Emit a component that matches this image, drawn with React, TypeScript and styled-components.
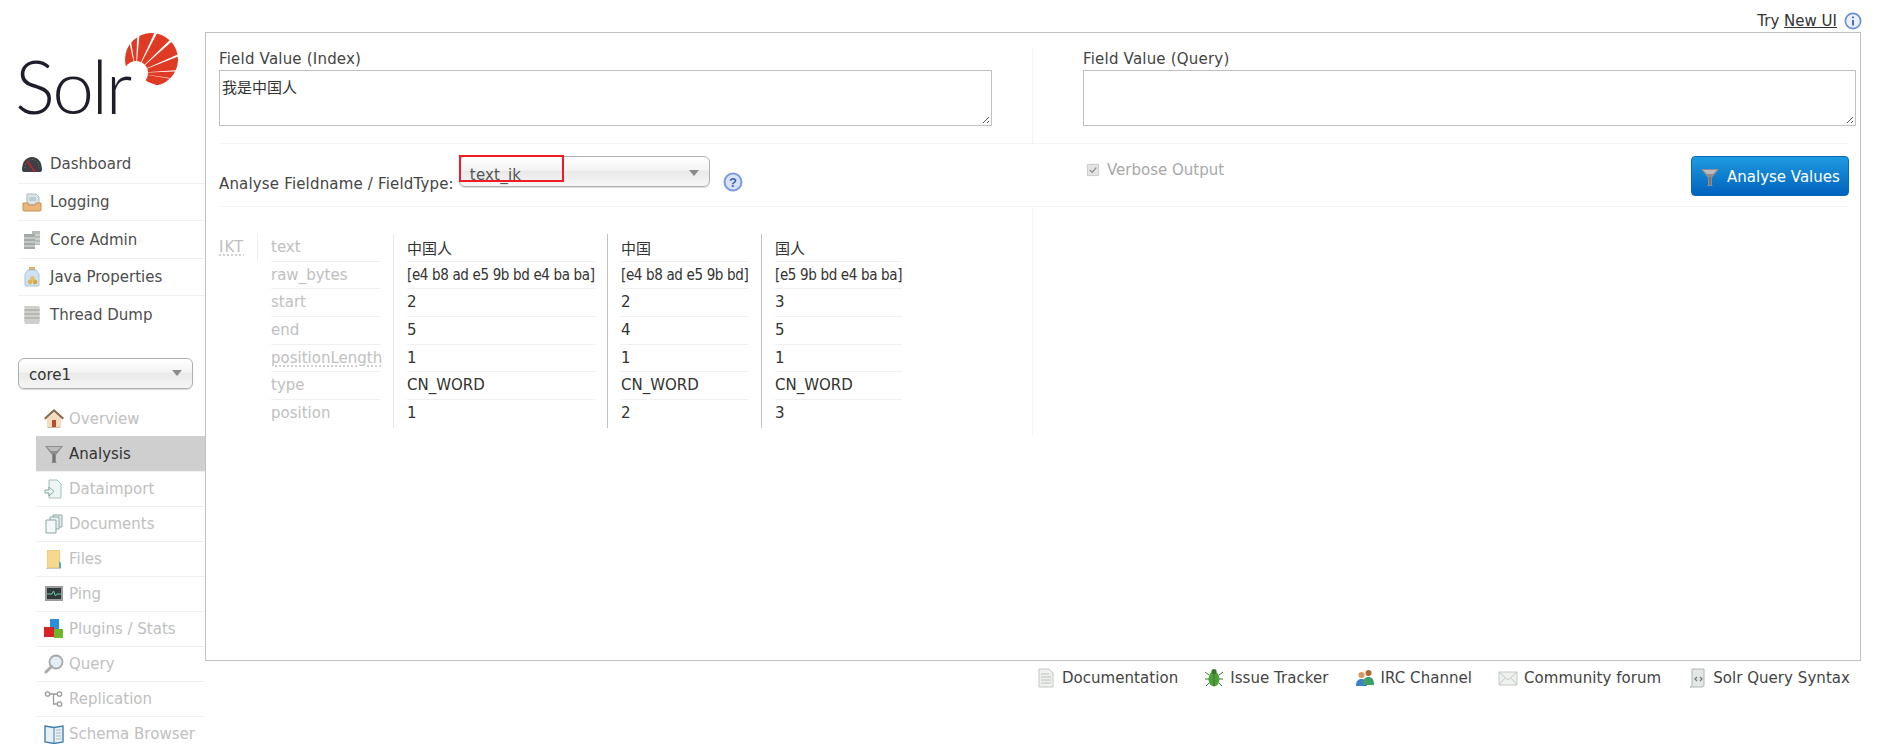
import * as React from "react";
import styled, { createGlobalStyle } from "styled-components";

const GlobalStyle = createGlobalStyle`
  html, body {
    margin: 0;
    height: 100%;
    overflow: hidden;
    background: #fff;
  }
  body {
    font-family: "DejaVu Sans", "Noto Sans CJK SC", sans-serif;
    font-size: 15px;
    color: #4d4d4d;
  }
`;

const Page = styled.div`
  display: flex;
  height: 744px;
  padding: 0 18px;
  box-sizing: border-box;
`;

const Sidebar = styled.aside`
  width: 187px;
  flex: none;
`;

const Logo = styled.div`
  position: relative;
  height: 145px;
  box-sizing: border-box;
  padding-top: 43px;
  margin-left: -3px;
`;

const LogoWord = styled.span`
  position: relative;
  z-index: 1;
  font-family: Lato, sans-serif;
  font-weight: 300;
  font-size: 75px;
  line-height: 84px;
  letter-spacing: -2.5px;
  color: #1f1c2c;
`;

const Sun = styled.svg`
  position: absolute;
  left: 109px;
  top: 32px;
`;

const MainMenu = styled.ul`
  list-style: none;
  margin: 0;
  padding: 0;
`;

const MainItem = styled.li`
  display: flex;
  align-items: center;
  gap: 8px;
  height: 37.5px;
  padding: 1px 0 0 4px;
  box-sizing: border-box;
  border-top: 1px solid #f0f0f0;
  &:first-child {
    border-top: 0;
  }
`;

const CoreSelect = styled.div`
  display: flex;
  align-items: center;
  justify-content: space-between;
  width: 175px;
  height: 31px;
  margin: 25px 0 12px;
  padding: 3px 10px 0;
  box-sizing: border-box;
  border: 1px solid #b0b0b0;
  border-radius: 6px;
  background: linear-gradient(#fff 0%, #f4f4f4 45%, #e9e9e9 50%, #f6f6f6 100%);
  box-shadow: 0 1px 1px rgba(0, 0, 0, 0.15);
  color: #333;
`;

const Caret = styled.i`
  display: block;
  margin-top: -3px;
  border-left: 5px solid transparent;
  border-right: 5px solid transparent;
  border-top: 6px solid #8a8a8a;
`;

const CoreMenu = styled.ul`
  list-style: none;
  margin: 0 0 0 18px;
  padding: 0;
`;

const CoreItem = styled.li<{ $active?: boolean }>`
  display: flex;
  align-items: center;
  gap: 5px;
  height: 35px;
  padding: 1px 0 0 8px;
  box-sizing: border-box;
  border-top: 1px solid ${(p) => (p.$active ? "#cfcfcf" : "#f0f0f0")};
  background: ${(p) => (p.$active ? "#cfcfcf" : "transparent")};
  color: ${(p) => (p.$active ? "#333" : "#c0c0c0")};
  &:first-child {
    border-top-color: transparent;
  }
`;

const Main = styled.main`
  flex: 1;
  min-width: 0;
`;

const TopBar = styled.div`
  display: flex;
  justify-content: flex-end;
  align-items: center;
  gap: 7px;
  height: 32px;
  padding: 9px 0 0 0;
  box-sizing: border-box;
  color: #333;
`;

const NewUi = styled.a`
  color: #333;
  text-decoration: underline;
`;

const Panel = styled.section`
  height: 629px;
  margin-right: 1px;
  padding: 15px 11px 0 13px;
  box-sizing: border-box;
  border: 1px solid #c0c0c0;
`;

const FormRow = styled.div<{ $height: number }>`
  display: grid;
  grid-template-columns: 814px 1fr;
  height: ${(p) => p.$height}px;
  box-sizing: border-box;
  border-bottom: 1px solid #f4f4f4;
`;

const FieldCell = styled.div<{ $right?: boolean }>`
  box-sizing: border-box;
  padding: ${(p) => (p.$right ? "0 0 0 50px" : "0 40px 0 0")};
  border-right: ${(p) => (p.$right ? "0" : "1px solid #f4f4f4")};
`;

const FieldLabel = styled.label`
  display: block;
  height: 22px;
  line-height: 23px;
  letter-spacing: 0.2px;
  color: #444;
`;

const ValueBox = styled.div<{ $overhang?: number }>`
  position: relative;
  height: 56px;
  margin-right: ${(p) => -(p.$overhang ?? 0)}px;
  padding: 5px 2px;
  box-sizing: border-box;
  border: 1px solid #c0c0c0;
  color: #333;
`;

const Grip = styled.svg`
  position: absolute;
  right: 1px;
  bottom: 1px;
`;

const Cjk = styled.span`
  font-family: "Noto Sans CJK SC", sans-serif;
  font-size: 15px;
`;

const OptionsLeft = styled.div`
  display: flex;
  align-items: flex-start;
  padding-top: 12px;
`;

const FieldTypeLabel = styled.label`
  margin: 19px 5px 0 0;
  letter-spacing: 0.17px;
  white-space: nowrap;
  color: #444;
`;

const TypeSelectWrap = styled.div`
  position: relative;
`;

const TypeSelect = styled(CoreSelect)`
  width: 251px;
  margin: 0;
  padding-top: 6px;
  letter-spacing: 0.2px;
  color: #555;
`;

const RedMark = styled.div`
  position: absolute;
  left: 0;
  top: -1px;
  width: 105px;
  height: 27px;
  box-sizing: border-box;
  border: 2px solid #ee1c25;
`;

const HelpIcon = styled.span`
  margin: 16px 0 0 13px;
`;

const OptionsRight = styled.div`
  display: flex;
  justify-content: space-between;
  padding: 17px 0 0 52px;
`;

const Verbose = styled.label`
  display: flex;
  align-items: center;
  gap: 6px;
  height: 18px;
  color: #a8a8a8;
`;

const AnalyseButton = styled.button`
  display: flex;
  align-items: center;
  gap: 7px;
  height: 40px;
  width: 158px;
  margin-top: -5px;
  padding: 1px 4px 0 8px;
  border: 1px solid #0a66b8;
  border-radius: 4px;
  background: linear-gradient(#1f9be0, #0062bd);
  color: #fff;
  font: inherit;
  white-space: nowrap;
`;

const Analysis = styled.div`
  display: grid;
  grid-template-columns: 814px 1fr;
`;

const AnalysisLeft = styled.div`
  display: flex;
  align-items: flex-start;
  height: 229px;
  padding-top: 27px;
  box-sizing: border-box;
  border-right: 1px solid #f4f4f4;
`;

const Tokenizer = styled.div`
  width: 39px;
  height: 27px;
  line-height: 27px;
  box-sizing: border-box;
  border-right: 1px solid #f0f0f0;
  flex: none;
  letter-spacing: 1px;
`;

const Abbr = styled.abbr`
  color: #c0c0c0;
  text-decoration: underline dotted #c0c0c0;
  text-underline-offset: 3px;
`;

const NameColumn = styled.div`
  width: 110px;
  margin: 0 12px 0 13px;
  flex: none;
`;

const TokenColumn = styled.div<{ $width: number; $first?: boolean }>`
  width: ${(p) => p.$width}px;
  padding: 0 12px 0 13px;
  flex: none;
  border-left: 1px solid ${(p) => (p.$first ? "#e8e8e8" : "#c0c0c0")};
`;

const NameCell = styled.div`
  height: 27.7px;
  line-height: 27px;
  box-sizing: border-box;
  color: #c0c0c0;
  white-space: nowrap;
  border-bottom: 1px solid #f0f0f0;
  &:last-child {
    border-bottom: 0;
  }
`;

const ValueCell = styled(NameCell)`
  color: #333;
`;

const BytesCell = styled(ValueCell)`
  font-family: "DejaVu Sans Condensed", "DejaVu Sans", sans-serif;
  letter-spacing: -0.35px;
`;

const Footer = styled.nav`
  display: flex;
  justify-content: flex-end;
  gap: 26px;
  padding: 6px 12px 0 0;
`;

const FooterLink = styled.a`
  display: flex;
  align-items: center;
  gap: 6px;
  height: 22px;
  letter-spacing: 0.05px;
  color: #444;
`;

const sunRays: [number, number][] = [
  [5, 3],
  [14.5, -1],
  [33, -2],
  [48, 7],
  [56, 22],
  [56, 38],
  [54, 47],
];

const SunMark = () => {
  const o = [12, 41];
  return (
    <Sun width="56" height="56" viewBox="0 0 56 56">
      <circle cx="27.5" cy="27.5" r="26.5" fill="#df3b24" />
      {sunRays.map(([x, y], i) => (
        <polygon key={i} points={`${o[0]},${o[1]} ${x - 1.2},${y} ${x + 1.2},${y + 1.2}`} fill="#fff" />
      ))}
      <circle cx={o[0]} cy={o[1]} r="12" fill="#fff" />
      <polygon points="12,41 -2,34 -2,58 40,58 38,55 24,50" fill="#fff" />
    </Sun>
  );
};

type IconName =
  | "dashboard" | "logging" | "cores" | "java" | "threads"
  | "overview" | "analysis" | "dataimport" | "documents" | "files"
  | "ping" | "plugins" | "query" | "replication" | "schema"
  | "doc" | "bug" | "irc" | "mail" | "syntax" | "info" | "help" | "check";

const iconArt: Record<IconName, React.ReactNode> = {
  dashboard: (
    <>
      <path d="M0 16C0 8 4 3 10 3s10 5 10 13c0 1-1 2-2 2H2c-1 0-2-1-2-2z" fill="#3d3f46" />
      <path d="M3 14C3 9 6 5.5 10 5.5s7 3.5 7 8.5" fill="none" stroke="#70737c" strokeWidth="1" strokeDasharray="1 2" />
      <path d="M5 7l8 11" stroke="#c8222a" strokeWidth="1.6" />
    </>
  ),
  logging: (
    <>
      <path d="M5 2h9l3 3v8H5z" fill="#d8e6ea" stroke="#a9bcc2" />
      <path d="M7 6h7M7 8h7" stroke="#9fb4ba" />
      <path d="M1 11h5l1 2h6l1-2h5v7a1 1 0 0 1-1 1H2a1 1 0 0 1-1-1z" fill="#eab47a" stroke="#c98f55" />
    </>
  ),
  cores: (
    <>
      <path d="M10 1h8v14h-8z" fill="#b2bdb6" />
      <path d="M2 4h11v15H2z" fill="#a5a9a8" />
      <path d="M2 8h11M2 12h11M2 16h11M13 5h5M13 9h5M13 13h5" stroke="#e4e6e2" />
    </>
  ),
  java: (
    <>
      <path d="M7 0h6v3H7z" fill="#d8b266" />
      <path d="M6 3h8l3 4v11a1 1 0 0 1-1 1H4a1 1 0 0 1-1-1V7z" fill="#cfe2f2" stroke="#a8c3da" />
      <circle cx="8" cy="15" r="2.4" fill="#dcb65c" />
      <circle cx="13" cy="15" r="2.4" fill="#d4a94e" />
      <circle cx="10.5" cy="11.5" r="2.4" fill="#e2c06a" />
    </>
  ),
  threads: (
    <>
      <path d="M2 1h15l1 2-1 2 1 2-1 2 1 2-1 2 1 2-1 4H3l-1-4 1-2-1-2 1-2-1-2 1-2z" fill="#cfcfcb" />
      <path d="M2 5h16M2 9h16M2 13h16" stroke="#9e9e9a" />
    </>
  ),
  overview: (
    <>
      <path d="M10 0L0 9l1.5 1.5L10 3l8.5 7.5L20 9z" fill="#8a6a4c" />
      <path d="M3 9.5l7-6.5 7 6.5V19H3z" fill="#f3dcc0" />
      <path d="M8 11h4v8H8z" fill="#b2502a" />
      <path d="M4 18h12v1H4z" fill="#c9b9a6" />
    </>
  ),
  analysis: (
    <>
      <path d="M1 2h18l-7 9v7l1 1H7l1-1v-7z" fill="#8d8d8d" />
      <path d="M3 3h14l-4 4H7z" fill="#bcbcbc" />
      <path d="M9.5 10h1v8h-1z" fill="#5f5f5f" />
    </>
  ),
  dataimport: (
    <>
      <path d="M5 1h8l4 4v14H5z" fill="#edf6f5" stroke="#9fc0ba" />
      <path d="M1 11h4V8l5 4.5L5 17v-3H1z" fill="#edf6f5" stroke="#86a5a0" />
    </>
  ),
  documents: (
    <>
      <path d="M9 1h9v12H9z" fill="#e2eeee" stroke="#8da7a6" />
      <path d="M6 3h9v12H6z" fill="#e8f2f2" stroke="#8da7a6" />
      <path d="M2 6h10v13H2z" fill="#f3f9f9" stroke="#8da7a6" />
    </>
  ),
  files: (
    <>
      <path d="M3 1h13v18H3z" fill="#f0ca78" />
      <path d="M4 2h11v16H4z" fill="#f6d88f" />
      <path d="M15 12l2 2v5h-2z" fill="#58a9b8" />
      <path d="M2 19h15v1H2z" fill="#c9c9c9" />
    </>
  ),
  ping: (
    <>
      <path d="M1 2h18v15H1z" fill="#9b9b9b" />
      <path d="M3 4h14v11H3z" fill="#33383a" />
      <path d="M3 10h5l1.5-3 2 5 1.5-2h4" fill="none" stroke="#5fd3a8" strokeWidth="1" />
    </>
  ),
  plugins: (
    <>
      <path d="M6 0h9v10H6z" fill="#2a8fd8" />
      <path d="M0 8h10v10H0z" fill="#d8222a" />
      <path d="M10 10h9v9h-9z" fill="#70b52e" />
    </>
  ),
  query: (
    <>
      <circle cx="12" cy="8" r="6.5" fill="#e4eef4" stroke="#a9a9a9" strokeWidth="1.8" />
      <path d="M7.5 12.5L2 18" stroke="#ababab" strokeWidth="3" strokeLinecap="round" />
    </>
  ),
  replication: (
    <>
      <circle cx="3.5" cy="5" r="2.2" fill="#fff" stroke="#9a9a9a" strokeWidth="1.3" />
      <circle cx="15.5" cy="5" r="2.2" fill="#fff" stroke="#9a9a9a" strokeWidth="1.3" />
      <circle cx="15.5" cy="15" r="2.2" fill="#fff" stroke="#9a9a9a" strokeWidth="1.3" />
      <path d="M6 5h3.5v10H13M9.5 5H13" fill="none" stroke="#9a9a9a" strokeWidth="1.3" />
    </>
  ),
  schema: (
    <>
      <path d="M1 2l9 1.5L19 2v16l-9 1.5L1 18z" fill="#e8f0f6" stroke="#3f7fb2" strokeWidth="1.4" />
      <path d="M10 3.5v16" stroke="#3f7fb2" />
      <path d="M12 6h5M12 9h5M12 12h5M12 15h5" stroke="#aeb6bc" />
    </>
  ),
  doc: (
    <>
      <path d="M3 1h10l4 4v14H3z" fill="#eef1ee" stroke="#c3c7c3" />
      <path d="M5 6h8M5 9h10M5 12h10M5 15h10" stroke="#bcc2bc" />
    </>
  ),
  bug: (
    <>
      <ellipse cx="10" cy="11" rx="5.5" ry="7.5" fill="#4ca03a" />
      <circle cx="10" cy="3.5" r="2.6" fill="#37752c" />
      <path d="M5 7L1 4M5 11H1M5 15l-3 3M15 7l4-3M15 11h4M15 15l3 3M10 6v12" stroke="#37752c" />
    </>
  ),
  irc: (
    <>
      <circle cx="6.5" cy="7" r="3" fill="#d9985e" />
      <path d="M1 18c0-5 2-7 5.5-7s5.5 2 5.5 7z" fill="#3a80c8" />
      <circle cx="13.5" cy="5" r="3" fill="#b8682f" />
      <path d="M8 17c0-6 2-8 5.5-8s5.5 2 5.5 8z" fill="#3fa06a" />
    </>
  ),
  mail: (
    <>
      <path d="M1 4h18v13H1z" fill="#eef2ee" stroke="#c6cbc6" />
      <path d="M1 4l9 8 9-8M1 17l6-7M19 17l-6-7" fill="none" stroke="#c6cbc6" />
    </>
  ),
  syntax: (
    <>
      <path d="M5 1h12v16a2 2 0 0 1-2 2H3c1 0 2-1 2-2z" fill="#e3e8e5" stroke="#aeb6b2" />
      <path d="M10 9l-2 2 2 2M13 9l2 2-2 2" fill="none" stroke="#6f7773" strokeWidth="1.2" />
    </>
  ),
  info: (
    <>
      <circle cx="10" cy="10" r="8.5" fill="#e8f0fb" stroke="#6a8fd8" strokeWidth="1.8" />
      <path d="M10 5v2M10 9v6" stroke="#3d62b8" strokeWidth="2" />
    </>
  ),
  help: (
    <>
      <circle cx="10" cy="10" r="8.5" fill="#d9e3f8" stroke="#7f9ade" strokeWidth="2" />
      <text x="10" y="14.5" textAnchor="middle" fontSize="13" fontWeight="700" fill="#3f5fb5" fontFamily="Liberation Sans, sans-serif">?</text>
    </>
  ),
  check: (
    <>
      <path d="M3 3h14v14H3z" fill="#e4e4e4" stroke="#c0c0c0" />
      <path d="M6 10l3 3 5-6" fill="none" stroke="#8a8a8a" strokeWidth="1.6" />
    </>
  ),
};

const Icon = ({ name, size = 20 }: { name: IconName; size?: number }) => (
  <svg width={size} height={size} viewBox="0 0 20 20" style={{ flex: "none" }}>
    {iconArt[name]}
  </svg>
);

const mainItems: [IconName, string][] = [
  ["dashboard", "Dashboard"],
  ["logging", "Logging"],
  ["cores", "Core Admin"],
  ["java", "Java Properties"],
  ["threads", "Thread Dump"],
];

const coreItems: [IconName, string][] = [
  ["overview", "Overview"],
  ["analysis", "Analysis"],
  ["dataimport", "Dataimport"],
  ["documents", "Documents"],
  ["files", "Files"],
  ["ping", "Ping"],
  ["plugins", "Plugins / Stats"],
  ["query", "Query"],
  ["replication", "Replication"],
  ["schema", "Schema Browser"],
];

const footerItems: [IconName, string][] = [
  ["doc", "Documentation"],
  ["bug", "Issue Tracker"],
  ["irc", "IRC Channel"],
  ["mail", "Community forum"],
  ["syntax", "Solr Query Syntax"],
];

const tokens = [
  { width: 188, text: "中国人", bytes: "[e4 b8 ad e5 9b bd e4 ba ba]", start: 2, end: 5, position: 1 },
  { width: 128, text: "中国", bytes: "[e4 b8 ad e5 9b bd]", start: 2, end: 4, position: 2 },
  { width: 127, text: "国人", bytes: "[e5 9b bd e4 ba ba]", start: 3, end: 5, position: 3 },
];

const App = () => (
  <Page>
    <GlobalStyle />
    <Sidebar>
      <Logo>
        <LogoWord>Solr</LogoWord>
        <SunMark />
      </Logo>
      <MainMenu>
        {mainItems.map(([icon, label]) => (
          <MainItem key={label}>
            <Icon name={icon} />
            {label}
          </MainItem>
        ))}
      </MainMenu>
      <CoreSelect>
        core1
        <Caret />
      </CoreSelect>
      <CoreMenu>
        {coreItems.map(([icon, label]) => (
          <CoreItem key={label} $active={label === "Analysis"}>
            <Icon name={icon} />
            {label}
          </CoreItem>
        ))}
      </CoreMenu>
    </Sidebar>
    <Main>
      <TopBar>
        <span>
          Try <NewUi>New UI</NewUi>
        </span>
        <Icon name="info" size={18} />
      </TopBar>
      <Panel>
        <FormRow $height={96}>
          <FieldCell>
            <FieldLabel>Field Value (Index)</FieldLabel>
            <ValueBox>
              <Cjk>我是中国人</Cjk>
              <Grip width="10" height="10" viewBox="0 0 10 10">
                <path d="M9 3L3 9M9 7L7 9" stroke="#555" fill="none" />
              </Grip>
            </ValueBox>
          </FieldCell>
          <FieldCell $right>
            <FieldLabel>Field Value (Query)</FieldLabel>
            <ValueBox $overhang={7}>
              <Grip width="10" height="10" viewBox="0 0 10 10">
                <path d="M9 3L3 9M9 7L7 9" stroke="#555" fill="none" />
              </Grip>
            </ValueBox>
          </FieldCell>
        </FormRow>
        <FormRow $height={63}>
          <OptionsLeft>
            <FieldTypeLabel>Analyse Fieldname / FieldType:</FieldTypeLabel>
            <TypeSelectWrap>
              <TypeSelect>
                text_ik
                <Caret />
              </TypeSelect>
              <RedMark />
            </TypeSelectWrap>
            <HelpIcon>
              <Icon name="help" size={20} />
            </HelpIcon>
          </OptionsLeft>
          <OptionsRight>
            <Verbose>
              <Icon name="check" size={16} />
              Verbose Output
            </Verbose>
            <AnalyseButton>
              <Icon name="analysis" size={20} />
              Analyse Values
            </AnalyseButton>
          </OptionsRight>
        </FormRow>
        <Analysis>
          <AnalysisLeft>
            <Tokenizer>
              <Abbr>IKT</Abbr>
            </Tokenizer>
            <NameColumn>
              <NameCell>text</NameCell>
              <NameCell>raw_bytes</NameCell>
              <NameCell>start</NameCell>
              <NameCell>end</NameCell>
              <NameCell>
                <Abbr>positionLength</Abbr>
              </NameCell>
              <NameCell>type</NameCell>
              <NameCell>position</NameCell>
            </NameColumn>
            {tokens.map((t, i) => (
              <TokenColumn key={t.text} $width={t.width} $first={i === 0}>
                <ValueCell>
                  <Cjk>{t.text}</Cjk>
                </ValueCell>
                <BytesCell>{t.bytes}</BytesCell>
                <ValueCell>{t.start}</ValueCell>
                <ValueCell>{t.end}</ValueCell>
                <ValueCell>1</ValueCell>
                <ValueCell>CN_WORD</ValueCell>
                <ValueCell>{t.position}</ValueCell>
              </TokenColumn>
            ))}
          </AnalysisLeft>
        </Analysis>
      </Panel>
      <Footer>
        {footerItems.map(([icon, label]) => (
          <FooterLink key={label}>
            <Icon name={icon} />
            {label}
          </FooterLink>
        ))}
      </Footer>
    </Main>
  </Page>
);

export default App;
